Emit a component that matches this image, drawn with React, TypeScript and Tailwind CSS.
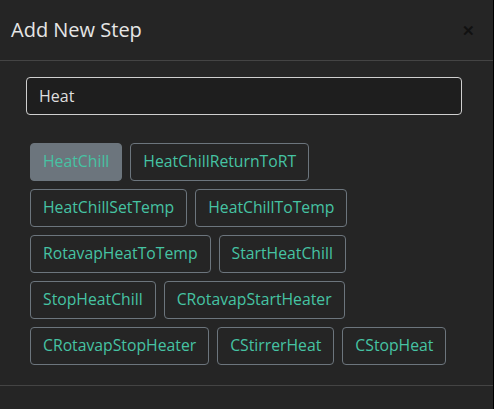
import { useState } from "react";

const STEPS = [
  "HeatChill",
  "HeatChillReturnToRT",
  "HeatChillSetTemp",
  "HeatChillToTemp",
  "RotavapHeatToTemp",
  "StartHeatChill",
  "StopHeatChill",
  "CRotavapStartHeater",
  "CRotavapStopHeater",
  "CStirrerHeat",
  "CStopHeat",
];

export default function App() {
  const [query, setQuery] = useState("Heat");
  const [selected, setSelected] = useState("HeatChill");

  return (
    <div
      className="w-[494px] h-[409px] bg-[#252525] border-r border-black overflow-hidden flex flex-col"
      style={{ fontFamily: '"Open Sans", "Noto Sans", sans-serif' }}
    >
      <div className="h-[61px] shrink-0 flex items-center justify-between pl-[11px] pr-[18px] border-b border-[#444]">
        <h5 className="text-[20px] font-medium text-[#e6e6e6]">Add New Step</h5>
        <button type="button" aria-label="Close" className="text-[#111] text-[15px] font-bold leading-none">
          &#x2715;
        </button>
      </div>

      <div className="flex-1 px-[26px] pt-[16px]">
        <input
          value={query}
          onChange={(e) => setQuery(e.target.value)}
          className="w-[436px] h-[38px] rounded-[4px] border border-[#cfcfcf] bg-[#1e1e1e] px-[12px] text-[16px] text-[#dedede] outline-none"
        />
        <div className="mt-[28px] pl-[4px] flex flex-wrap gap-[8px] w-[432px]">
          {STEPS.map((s) => (
            <button
              key={s}
              type="button"
              onClick={() => setSelected(s)}
              className={
                s === selected
                  ? "h-[38px] px-[12px] rounded-[4px] border border-[#6c757d] bg-[#6c757d] text-[15.75px] text-[#46c3a3]"
                  : "h-[38px] px-[12px] rounded-[4px] border border-[#6c757d] bg-transparent text-[15.75px] text-[#46c3a3]"
              }
            >
              {s}
            </button>
          ))}
        </div>
      </div>

      <div className="h-[24px] shrink-0 border-t border-[#444]" />
    </div>
  );
}
